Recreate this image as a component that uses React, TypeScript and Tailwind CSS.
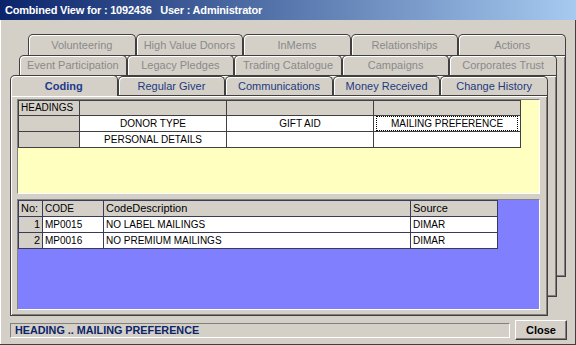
import React from "react";

const tabBase =
  "flex items-center justify-center rounded-t-[5px] border border-b-0 border-[#404040] bg-[#d4d0c8] shadow-[inset_1px_1px_0_#ffffff] text-[11px] whitespace-nowrap";

function BackRow({ labels, h }: { labels: string[]; h: string }) {
  return (
    <div className={`flex ${h}`}>
      {labels.map((l) => (
        <div key={l} className={`${tabBase} flex-1 text-[#8a8a8a]`}>
          {l}
        </div>
      ))}
    </div>
  );
}

function Cell({
  children,
  gray,
  align = "left",
  caps,
  focus,
}: {
  children?: React.ReactNode;
  gray?: boolean;
  align?: "left" | "center" | "right";
  caps?: boolean;
  focus?: boolean;
}) {
  const al =
    align === "center" ? "justify-center" : align === "right" ? "justify-end" : "justify-start";
  return (
    <div
      className={`flex items-center ${al} px-[2px] ${gray ? "bg-[#d4d0c8]" : "bg-white"} ${
        caps ? "text-[10px]" : "text-[11px]"
      } text-black leading-none whitespace-nowrap overflow-hidden`}
    >
      {focus ? (
        <div className="w-full h-full border border-dotted border-black flex items-center justify-center">
          {children}
        </div>
      ) : (
        children
      )}
    </div>
  );
}

export default function App() {
  const front = ["Regular Giver", "Communications", "Money Received", "Change History"];
  return (
    <div className="w-[576px] h-[345px] bg-[#d4d0c8] flex flex-col font-['Liberation_Sans',Arial,sans-serif] shadow-[inset_-1px_-1px_0_#404040,inset_1px_0_0_#ffffff] overflow-hidden">
      {/* Title bar */}
      <div className="h-[20px] shrink-0 bg-[linear-gradient(to_right,#0a246a,#a6caf0)] text-white font-bold text-[11px] tracking-[-0.2px] pl-[5px] flex items-center whitespace-pre">
        Combined View for : 1092436   User : Administrator
      </div>

      {/* Tab stack */}
      <div className="grid h-[296px] shrink-0">
        {/* Layer 1 */}
        <div className="col-start-1 row-start-1 self-start justify-self-start ml-[28px] mt-[14px] w-[538px] h-[243px] flex flex-col">
          <BackRow
            h="h-[21px]"
            labels={["Volunteering", "High Value Donors", "InMems", "Relationships", "Actions"]}
          />
          <div className="flex-1 border border-[#404040] bg-[#d4d0c8] shadow-[inset_1px_1px_0_#ffffff,inset_-1px_-1px_0_#808080]" />
        </div>

        {/* Layer 2 */}
        <div className="col-start-1 row-start-1 self-start justify-self-start ml-[19px] mt-[35px] w-[538px] h-[242px] flex flex-col">
          <BackRow
            h="h-[20px]"
            labels={[
              "Event Participation",
              "Legacy Pledges",
              "Trading Catalogue",
              "Campaigns",
              "Corporates Trust",
            ]}
          />
          <div className="flex-1 border border-[#404040] bg-[#d4d0c8] shadow-[inset_1px_1px_0_#ffffff,inset_-1px_-1px_0_#808080]" />
        </div>

        {/* Layer 3 (front) */}
        <div className="col-start-1 row-start-1 self-start justify-self-start ml-[10px] mt-[55px] w-[538px] h-[241px] flex flex-col">
          <div className="flex items-end h-[20px]">
            <div
              className={`${tabBase} flex-1 h-[21px] -mb-px relative z-10 font-bold text-[#1e3a8c]`}
            >
              Coding
            </div>
            {front.map((l) => (
              <div key={l} className={`${tabBase} flex-1 h-[19px] text-[#23397e]`}>
                {l}
              </div>
            ))}
          </div>
          <div className="flex-1 border border-[#404040] bg-[#d4d0c8] shadow-[inset_1px_1px_0_#ffffff,inset_-1px_-1px_0_#808080] pl-[6px] pt-[3px] pb-[5px] flex flex-col gap-[5px]">
            {/* Headings area */}
            <div className="w-[523px] h-[95px] shrink-0 bg-[#ffffc0] border border-[#808080] border-r-white border-b-white">
              <div className="grid grid-cols-[60px_146px_146px_146px] grid-rows-[14px_15px_15px] gap-px bg-[#404040] border border-[#404040] w-max">
                <Cell gray caps>HEADINGS</Cell>
                <Cell gray />
                <Cell gray />
                <Cell gray />
                <Cell gray />
                <Cell caps align="center">DONOR TYPE</Cell>
                <Cell caps align="center">GIFT AID</Cell>
                <Cell caps align="center" focus>
                  MAILING PREFERENCE
                </Cell>
                <Cell gray />
                <Cell caps align="center">PERSONAL DETAILS</Cell>
                <Cell />
                <Cell />
              </div>
            </div>

            {/* Codes grid area */}
            <div className="w-[523px] flex-1 bg-[#8080ff] border border-[#808080] border-r-white border-b-white">
              <div className="grid grid-cols-[23px_60px_306px_86px] grid-rows-[15px_15px_15px] gap-px bg-[#3a3a5a] border border-[#3a3a5a] w-max">
                <Cell gray>No:</Cell>
                <Cell gray caps>CODE</Cell>
                <Cell gray>CodeDescription</Cell>
                <Cell gray>Source</Cell>
                <Cell gray align="right">1</Cell>
                <Cell caps>MP0015</Cell>
                <Cell caps>NO LABEL MAILINGS</Cell>
                <Cell caps>DIMAR</Cell>
                <Cell gray align="right">2</Cell>
                <Cell caps>MP0016</Cell>
                <Cell caps>NO PREMIUM MAILINGS</Cell>
                <Cell caps>DIMAR</Cell>
              </div>
            </div>
          </div>
        </div>
      </div>

      {/* Status row */}
      <div className="flex items-center h-[20px] mt-[4px] shrink-0">
        <div className="ml-[10px] w-[500px] h-[15px] border border-[#808080] border-r-white border-b-white flex items-center pl-[4px] text-[10.8px] font-bold text-[#0a246a] whitespace-nowrap">
          HEADING .. MAILING PREFERENCE
        </div>
        <div className="ml-[5px] w-[52px] h-[20px] border border-white border-r-[#404040] border-b-[#404040] shadow-[inset_-1px_-1px_0_#808080] flex items-center justify-center text-[11px] font-bold text-black">
          Close
        </div>
      </div>
    </div>
  );
}
